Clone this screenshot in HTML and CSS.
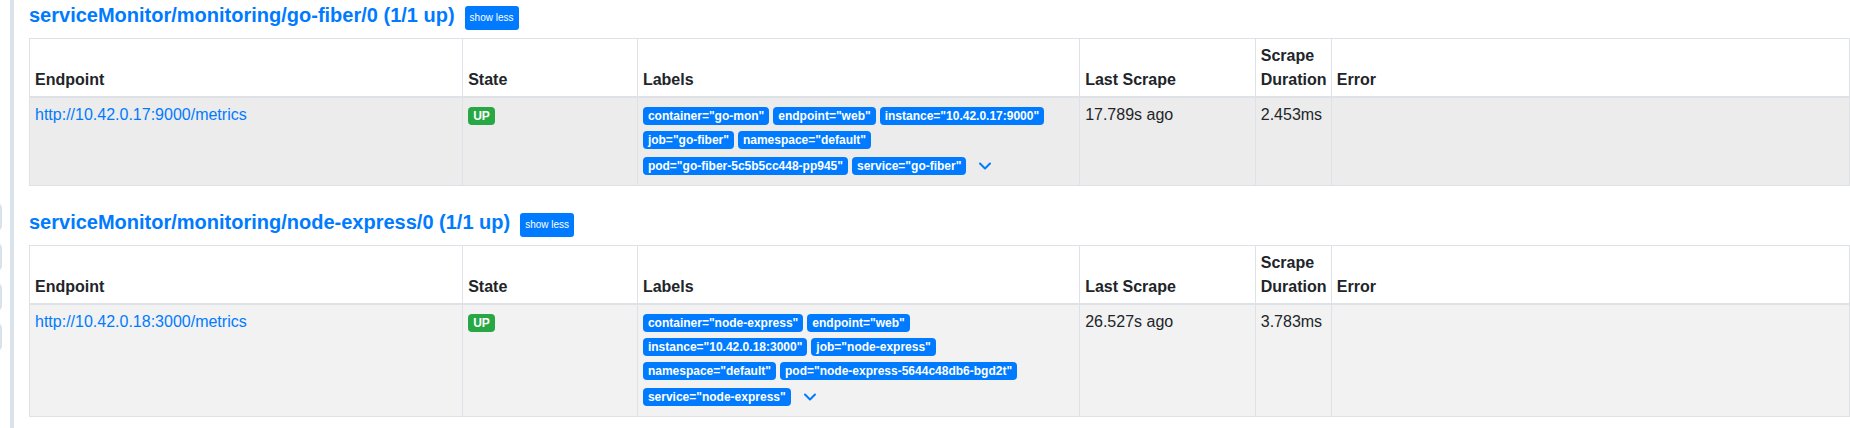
FILE: index.html
```html
<!DOCTYPE html>
<html lang="en">
<head>
<meta charset="utf-8">
<title>Targets</title>
<link rel="stylesheet" href="styles.css">
</head>
<body>
<div class="layout">
  <aside class="rail">
    <span class="pill"></span>
    <span class="pill"></span>
    <span class="pill"></span>
    <span class="pill"></span>
  </aside>
  <main class="content">
    <section class="pool">
      <header class="pool-header">
        <h3 class="pool-title"><a href="#go-fiber" id="go-fiber">serviceMonitor/monitoring/go-fiber/0 (1/1 up)</a></h3>
        <button type="button" class="toggle">show less</button>
      </header>
      <table class="targets">
        <colgroup><col class="c-endpoint"><col class="c-state"><col class="c-labels"><col class="c-last"><col class="c-duration"><col></colgroup>
        <thead>
          <tr><th>Endpoint</th><th>State</th><th>Labels</th><th>Last Scrape</th><th>Scrape Duration</th><th>Error</th></tr>
        </thead>
        <tbody>
          <tr class="hovered">
            <td><a href="http://10.42.0.17:9000/metrics">http://10.42.0.17:9000/metrics</a></td>
            <td><div class="badges"><span class="badge up">UP</span></div></td>
            <td>
              <div class="badges">
                <span class="badge">container="go-mon"</span>
                <span class="badge">endpoint="web"</span>
                <span class="badge">instance="10.42.0.17:9000"</span>
                <span class="badge">job="go-fiber"</span>
                <span class="badge">namespace="default"</span>
                <span class="badge">pod="go-fiber-5c5b5cc448-pp945"</span>
                <span class="badge">service="go-fiber"</span>
                <button type="button" class="expand" aria-label="Show discovered labels"><svg viewBox="0 0 12 12" width="12" height="12"><path d="M1 3.5 6 8.5 11 3.5"/></svg></button>
              </div>
            </td>
            <td>17.789s ago</td>
            <td>2.453ms</td>
            <td></td>
          </tr>
        </tbody>
      </table>
    </section>
    <section class="pool">
      <header class="pool-header">
        <h3 class="pool-title"><a href="#node-express" id="node-express">serviceMonitor/monitoring/node-express/0 (1/1 up)</a></h3>
        <button type="button" class="toggle">show less</button>
      </header>
      <table class="targets">
        <colgroup><col class="c-endpoint"><col class="c-state"><col class="c-labels"><col class="c-last"><col class="c-duration"><col></colgroup>
        <thead>
          <tr><th>Endpoint</th><th>State</th><th>Labels</th><th>Last Scrape</th><th>Scrape Duration</th><th>Error</th></tr>
        </thead>
        <tbody>
          <tr>
            <td><a href="http://10.42.0.18:3000/metrics">http://10.42.0.18:3000/metrics</a></td>
            <td><div class="badges"><span class="badge up">UP</span></div></td>
            <td>
              <div class="badges">
                <span class="badge">container="node-express"</span>
                <span class="badge">endpoint="web"</span>
                <span class="badge">instance="10.42.0.18:3000"</span>
                <span class="badge">job="node-express"</span>
                <span class="badge">namespace="default"</span>
                <span class="badge">pod="node-express-5644c48db6-bgd2t"</span>
                <span class="badge">service="node-express"</span>
                <button type="button" class="expand" aria-label="Show discovered labels"><svg viewBox="0 0 12 12" width="12" height="12"><path d="M1 3.5 6 8.5 11 3.5"/></svg></button>
              </div>
            </td>
            <td>26.527s ago</td>
            <td>3.783ms</td>
            <td></td>
          </tr>
        </tbody>
      </table>
    </section>
  </main>
</div>
</body>
</html>
```
FILE: styles.css
```css
* { box-sizing: border-box; }

body {
  margin: 0;
  background: #fff;
  color: #212529;
  font: 16px/24px "Liberation Sans", Arial, sans-serif;
}

a { color: #007bff; text-decoration: none; }

.layout { display: flex; min-height: 100vh; }

.rail {
  flex: none;
  width: 14px;
  padding-top: 203px;
  border-right: 4px solid #d9e3ec;
  display: flex;
  flex-direction: column;
  gap: 12px;
  overflow: hidden;
}

.pill {
  width: 20px;
  height: 28px;
  margin-left: -18px;
  border-radius: 5px;
  background: #d9e3ec;
}

.content {
  flex: 1;
  min-width: 0;
  padding: 6px 0 0 15px;
}

.pool { margin-bottom: 27px; }
.pool:last-child { margin-bottom: 0; }

.pool-header {
  display: flex;
  align-items: flex-start;
  gap: 10px;
  margin-bottom: 8px;
}

.pool-title { margin: 0; font-size: 20px; line-height: 18px; }

.toggle {
  height: 24px;
  padding: 0 5px;
  border: 0;
  border-radius: 3px;
  background: #007bff;
  color: #fff;
  font: 10px/16px "Liberation Sans", Arial, sans-serif;
}

.targets {
  width: 100%;
  table-layout: fixed;
  border-collapse: collapse;
}

.c-endpoint { width: 23.8%; }
.c-state { width: 9.6%; }
.c-labels { width: 24.3%; }
.c-last { width: 9.65%; }
.c-duration { width: 76px; }

.targets th,
.targets td {
  padding: 5px;
  border: 1px solid #dee2e6;
  text-align: left;
  vertical-align: top;
}

.targets th {
  padding-bottom: 4px;
  border-bottom-width: 2px;
  vertical-align: bottom;
}

.targets tbody tr { background: #f2f2f2; }
.targets tbody .hovered { background: #ececec; }

.badges {
  display: flex;
  flex-wrap: wrap;
  align-items: center;
  row-gap: 6px;
  padding: 4px 0 3px;
}

.badge {
  height: 18px;
  margin-right: 4px;
  padding: 0 5px;
  border-radius: 4px;
  background: #007bff;
  color: #fff;
  font-size: 12px;
  font-weight: 700;
  line-height: 18px;
  white-space: nowrap;
}

.up { background: #28a745; }

.expand {
  display: flex;
  align-items: center;
  height: 22px;
  padding: 0 9px;
  border: 0;
  background: none;
  color: #007bff;
}

.expand svg { fill: none; stroke: currentColor; stroke-width: 2; stroke-linecap: round; stroke-linejoin: round; }
```
